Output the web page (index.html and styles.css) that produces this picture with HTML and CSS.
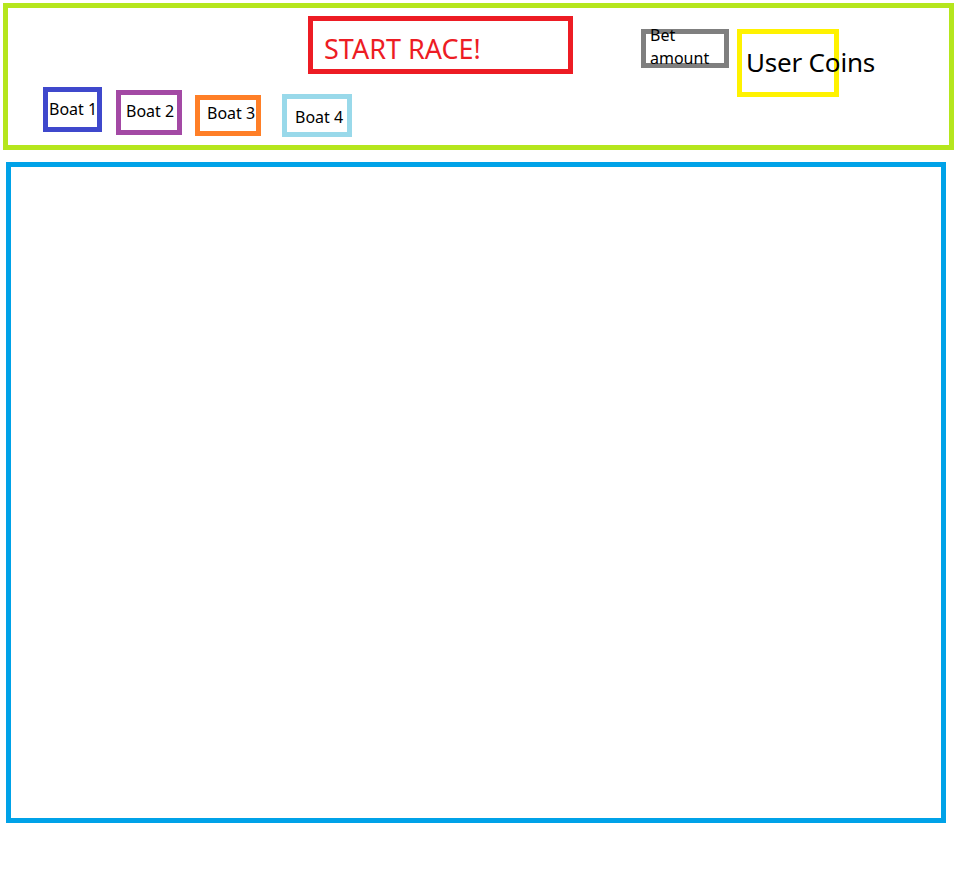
FILE: index.html
```html
<!DOCTYPE html>
<html lang="en">
<head>
<meta charset="utf-8">
<title>Boat Race</title>
<link rel="stylesheet" href="styles.css">
</head>
<body>
  <header class="header">
    <div class="row-top">
      <div class="start">START RACE!</div>
      <div class="bet"><span class="bet-text">Bet amount</span></div>
      <div class="coins">User Coins</div>
    </div>
    <div class="row-boats">
      <div class="boat boat1">Boat 1</div>
      <div class="boat boat2">Boat 2</div>
      <div class="boat boat3">Boat 3</div>
      <div class="boat boat4">Boat 4</div>
    </div>
  </header>
  <main class="track"></main>
</body>
</html>
```
FILE: styles.css
```css
html, body {
  background: #ffffff;
}
body {
  margin: 0;
  padding: 3px 0 0 3px;
  font-family: "Noto Sans", "Open Sans", sans-serif;
  color: #000000;
}
.header {
  box-sizing: border-box;
  width: 951px;
  height: 147px;
  border: 5px solid #b5e61d;
  display: flex;
  flex-direction: column;
}
.row-top {
  display: flex;
  align-items: flex-start;
  height: 79px;
  padding-left: 300px;
}
.start {
  box-sizing: border-box;
  margin-top: 8px;
  width: 265px;
  height: 58px;
  border: 5px solid #ed1c24;
  color: #ed1c24;
  font-size: 27px;
  line-height: 32px;
  padding: 12px 0 0 11px;
  white-space: nowrap;
}
.bet {
  box-sizing: border-box;
  margin: 21px 0 0 68px;
  width: 88px;
  height: 39px;
  border: 5px solid #7f7f7f;
}
.bet-text {
  display: block;
  margin-top: -10px;
  padding-left: 4px;
  font-size: 16px;
  line-height: 23px;
}
.coins {
  box-sizing: border-box;
  margin: 21px 0 0 8px;
  width: 102px;
  height: 68px;
  border: 5px solid #fff200;
  font-size: 26px;
  letter-spacing: -0.2px;
  line-height: 32px;
  padding: 12px 0 0 4px;
  white-space: nowrap;
}
.row-boats {
  display: flex;
  align-items: flex-start;
  padding-left: 35px;
}
.boat {
  box-sizing: border-box;
  border: 5px solid;
  font-size: 16px;
  line-height: 18px;
  white-space: nowrap;
}
.boat1 {
  border-color: #3f48cc;
  width: 59px;
  height: 45px;
  padding: 8px 0 0 1px;
}
.boat2 {
  border-color: #a349a4;
  margin: 3px 0 0 14px;
  width: 66px;
  height: 45px;
  padding: 7px 0 0 5px;
}
.boat3 {
  border-color: #ff7f27;
  margin: 8px 0 0 13px;
  width: 66px;
  height: 41px;
  padding: 4px 0 0 7px;
}
.boat4 {
  border-color: #99d9ea;
  margin: 7px 0 0 21px;
  width: 70px;
  height: 43px;
  padding: 9px 0 0 8px;
}
.track {
  display: block;
  box-sizing: border-box;
  margin: 12px 0 0 3px;
  width: 940px;
  height: 661px;
  border: 5px solid #00a2e8;
}
```
